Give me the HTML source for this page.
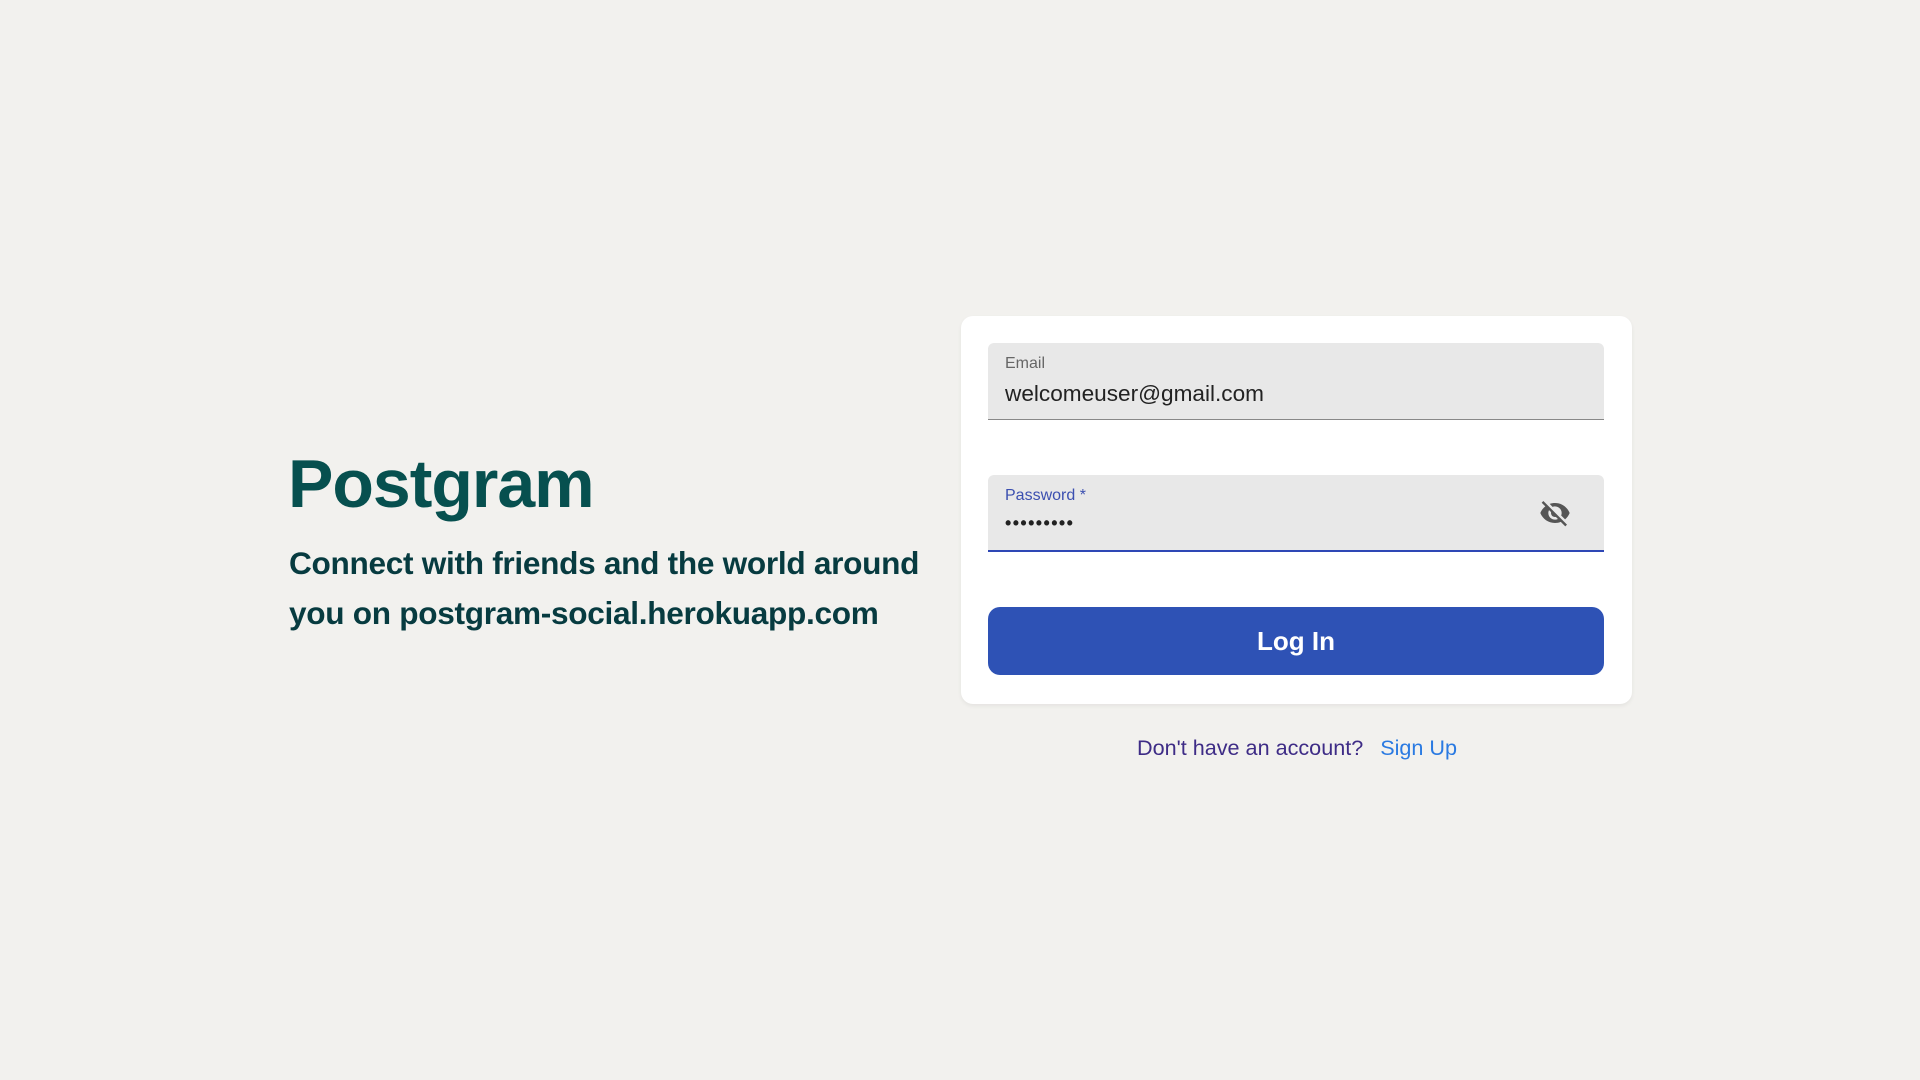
<!DOCTYPE html>
<html><head><meta charset="utf-8"><style>
*{margin:0;padding:0;box-sizing:border-box}
body{width:1920px;height:1080px;background:#f2f1ee;font-family:"Liberation Sans",sans-serif;position:relative;overflow:hidden}
.title{position:absolute;left:288px;top:445px;font-size:68px;font-weight:bold;color:#07504f;letter-spacing:-1px}
.tag{position:absolute;left:289px;top:538px;font-size:31.6px;font-weight:bold;color:#073b40;line-height:50px;letter-spacing:-0.3px}
.card{position:absolute;left:961px;top:316px;width:671px;height:388px;background:#fff;border-radius:12px;box-shadow:0 2px 4px rgba(0,0,0,.06)}
.field{position:absolute;left:27px;width:616px;height:77px;background:#e8e8e8;border-radius:6px 6px 0 0}
.field .lab{position:absolute;left:17px;top:12px;font-size:16px;color:#666}
.field .val{position:absolute;left:17px;top:38px;font-size:22.6px;color:#222}
.btn{position:absolute;left:27px;top:291px;width:616px;height:68px;background:#2e52b5;border-radius:12px;color:#fff;font-size:26px;font-weight:bold;text-align:center;line-height:68px}
.foot{position:absolute;left:1137px;top:735px;font-size:21.6px;color:#3e2c86}
.foot span{color:#2a7ae2;margin-left:17px}
</style></head><body>
<div class="title">Postgram</div>
<div class="tag">Connect with friends and the world around<br>you on postgram-social.herokuapp.com</div>
<div class="card">
 <div class="field" style="top:27px;border-bottom:1.5px solid #888">
  <div class="lab">Email</div><div class="val">welcomeuser@gmail.com</div>
 </div>
 <div class="field" style="top:159px;border-bottom:2px solid #2e47b5">
  <div class="lab" style="color:#3b4fb0">Password *</div>
  <div class="val" style="top:38px;font-size:18px;letter-spacing:1.4px;font-weight:bold">•••••••••</div>
  <svg style="position:absolute;left:551px;top:22px" width="32" height="32" viewBox="0 0 24 24"><path fill="#555" d="M12 7c2.76 0 5 2.24 5 5 0 .65-.13 1.26-.36 1.830l2.92 2.92c1.51-1.26 2.7-2.89 3.43-4.75-1.73-4.39-6-7.5-11-7.5-1.4 0-2.740.25-3.98.7l2.16 2.16C10.74 7.13 11.35 7 12 7zM2 4.27l2.28 2.28.46.46C3.08 8.3 1.78 10.02 1 12c1.73 4.39 6 7.5 11 7.5 1.55 0 3.03-.3 4.38-.84l.42.42L19.73 22 21 20.73 3.27 3 2 4.27zM7.53 9.8l1.55 1.55c-.05.21-.08.43-.08.65 0 1.66 1.34 3 3 3 .22 0 .44-.03.65-.08l1.550 1.55c-.67.33-1.41.53-2.2.53-2.76 0-5-2.24-5-5 0-.79.2-1.53.53-2.2z"/></svg>
 </div>
 <div class="btn">Log In</div>
</div>
<div class="foot">Don't have an account?<span>Sign Up</span></div>
</body></html>
